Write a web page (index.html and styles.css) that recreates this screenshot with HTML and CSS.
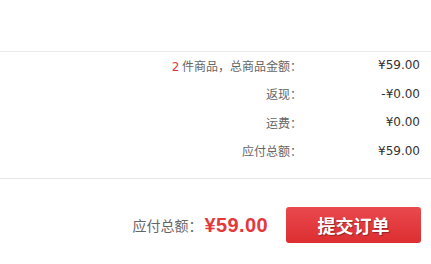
FILE: index.html
```html
<!DOCTYPE html>
<html lang="zh-CN">

<head>
    <meta charset="UTF-8">
    <meta name="viewport" content="width=device-width, initial-scale=1.0">
    <title>结算</title>
    <link rel="stylesheet" href="styles.css">
</head>

<body>
    <div class="order-summary">
        <div class="summary-list">
            <div class="summary-row">
                <span class="label"><em class="count">2</em> 件商品，总商品金额：</span>
                <span class="value">¥59.00</span>
            </div>
            <div class="summary-row">
                <span class="label">返现：</span>
                <span class="value">-¥0.00</span>
            </div>
            <div class="summary-row">
                <span class="label">运费：</span>
                <span class="value">¥0.00</span>
            </div>
            <div class="summary-row">
                <span class="label">应付总额：</span>
                <span class="value">¥59.00</span>
            </div>
        </div>

        <div class="checkout-bar">
            <span class="total-label">应付总额：</span>
            <span class="total-price">¥59.00</span>
            <button class="submit-btn" id="submitOrder">提交订单</button>
        </div>
    </div>
</body>

</html>
```

FILE: styles.css
```css
body {
    margin: 0;
    padding: 0;
    background: #fff;
    font-family: "DejaVu Sans", "Noto Sans CJK SC", sans-serif;
    font-size: 12px;
}

.order-summary {
    padding-top: 51px;
}

.summary-list {
    border-top: 1px solid #e9e9e9;
    border-bottom: 1px solid #e6e6e6;
    padding-bottom: 13px;
}

.summary-row {
    display: flex;
    justify-content: flex-end;
    align-items: center;
    height: 28.5px;
    padding-right: 11px;
}

.summary-row:first-child {
    margin-top: -1px;
}

.summary-row .label {
    color: #666;
    font-family: "Noto Sans CJK SC", sans-serif;
}

.summary-row .label .count {
    font-style: normal;
    color: #e4393c;
    font-family: "DejaVu Sans", sans-serif;
}

.summary-row .value {
    width: 118px;
    text-align: right;
    color: #333;
}

.checkout-bar {
    display: flex;
    justify-content: flex-end;
    align-items: center;
    padding: 28px 10px 0 0;
}

.total-label {
    color: #666;
    font-size: 14px;
    font-family: "Noto Sans CJK SC", sans-serif;
    margin-right: 2px;
}

.total-price {
    color: #e4393c;
    font-family: "Liberation Sans", sans-serif;
    font-weight: bold;
    font-size: 20px;
    letter-spacing: 0.4px;
    margin-right: 18px;
}

.submit-btn {
    width: 135px;
    height: 36px;
    border: none;
    border-radius: 3px;
    background: linear-gradient(to bottom, #e9494e, #dd2e31);
    color: #fff;
    font-family: "Noto Sans CJK SC", sans-serif;
    font-size: 18px;
    font-weight: bold;
    text-shadow: 1px 1px 1px rgba(0, 0, 0, 0.35);
    cursor: pointer;
    padding: 0;
}

.submit-btn:focus {
    outline: none;
}
```
